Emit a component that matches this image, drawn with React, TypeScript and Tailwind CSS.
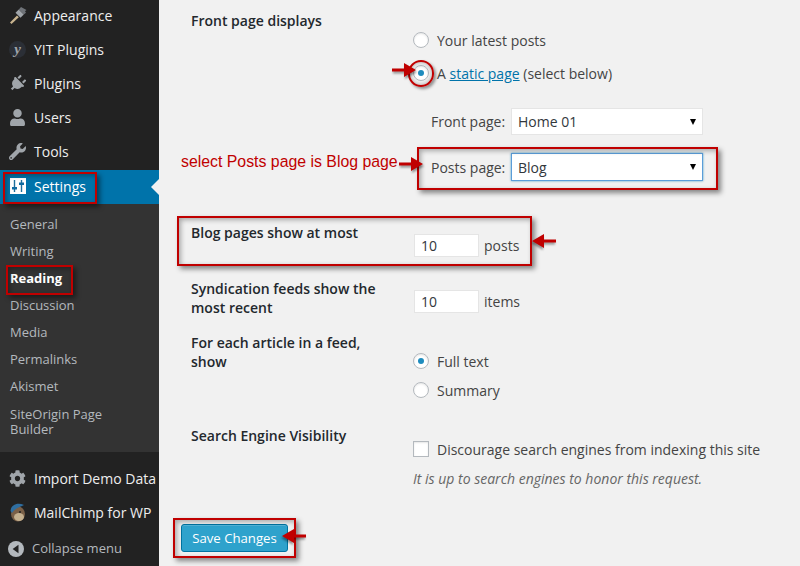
import React from "react";
import { FaPlug, FaUser, FaWrench, FaCog } from "react-icons/fa";

const font = "font-['Open_Sans',sans-serif]";

const BrushIcon = () => (
  <svg width="18" height="18" viewBox="0 0 18 18">
    <path d="M1 16.5 8 9.5l1.8 1.8L2.5 18Z" fill="#c9b48f" />
    <path d="M6.5 6.8 9.8 3.5l5 5-3.3 3.3Z" fill="#a0a5aa" />
    <path d="M9.8 3.5 12 1l5.5 3-1.5 1.2 1 1.6-2.2 1.7Z" fill="#6f7378" />
  </svg>
);

const SettingsIcon = () => (
  <svg width="16" height="16" viewBox="0 0 16 16">
    <rect width="16" height="16" fill="#fff" />
    <path d="M4.5 2v12M11.5 2v12" stroke="#1d6f9c" strokeWidth="1.4" />
    <path d="M2 9h5v2.4H2ZM9 4.6h5V7H9Z" fill="#0f6aa0" />
  </svg>
);

const YitIcon = () => (
  <div className="flex h-[17px] w-[17px] items-center justify-center rounded-full bg-[#2b2f36] font-['Liberation_Serif',serif] text-[15px] font-bold italic leading-none text-[#a0a5aa]">
    y
  </div>
);

const ChimpIcon = () => (
  <svg width="18" height="20" viewBox="0 0 18 20">
    <ellipse cx="9" cy="12" rx="7" ry="7.5" fill="#7a6048" />
    <ellipse cx="10" cy="15" rx="5" ry="4" fill="#c4b08f" />
    <path d="M1.5 9C2 3 8 0 15 3 12 4.5 6 6 3 11Z" fill="#2f6ea0" />
    <circle cx="11" cy="10" r="1" fill="#222" />
  </svg>
);

const CollapseIcon = () => (
  <svg width="16" height="16" viewBox="0 0 16 16">
    <circle cx="8" cy="8" r="8" fill="#b4b9be" />
    <path d="M10.5 3.8v8.4L4.6 8Z" fill="#222" />
  </svg>
);

const MenuItem = ({ icon, label }: { icon: React.ReactNode; label: string }) => (
  <div className="flex h-[34px] items-center pb-[4px] text-[14px] text-[#eee]">
    <div className="flex w-[34px] items-center justify-center pl-[1px] text-[17px] text-[#a0a5aa]">{icon}</div>
    <span className="whitespace-nowrap">{label}</span>
  </div>
);

const subItems = ["General", "Writing", "Reading", "Discussion", "Media", "Permalinks", "Akismet"];

const Sidebar = () => (
  <div className="flex h-[566px] w-[159px] shrink-0 flex-col overflow-hidden bg-[#222]">
    <div>
      <MenuItem icon={<BrushIcon />} label="Appearance" />
      <MenuItem icon={<YitIcon />} label="YIT Plugins" />
      <MenuItem icon={<FaPlug className="rotate-45" />} label="Plugins" />
      <MenuItem icon={<FaUser />} label="Users" />
      <MenuItem icon={<FaWrench />} label="Tools" />
    </div>
    <div className="relative flex h-[34px] items-center bg-[#0073aa] pb-[2px] text-[14px] text-white">
      <div className="flex w-[34px] items-center justify-center pl-[1px]"><SettingsIcon /></div>
      <span>Settings</span>
      <div className="absolute right-0 top-[9px] h-0 w-0 border-y-[8px] border-r-[8px] border-y-transparent border-r-[#f1f1f1]" />
    </div>
    <div className="flex h-[248px] flex-col bg-[#333] pt-[7px] text-[13px] text-[#b4b9be]">
      {subItems.map((s) => (
        <div key={s} className={`flex h-[27px] items-center pl-[10px] ${s === "Reading" ? "font-bold text-white" : ""}`}>
          {s}
        </div>
      ))}
      <div className="mt-[7px] pl-[10px] leading-[15px]">SiteOrigin Page<br />Builder</div>
    </div>
    <div className="mt-[11px]">
      <MenuItem icon={<FaCog />} label="Import Demo Data" />
      <MenuItem icon={<ChimpIcon />} label="MailChimp for WP" />
    </div>
    <div className="mt-[1px] flex h-[34px] items-center text-[13px] text-[#b4b9be]">
      <div className="flex w-[32px] items-center justify-center"><CollapseIcon /></div>
      <span>Collapse menu</span>
    </div>
  </div>
);

const Radio = ({ checked }: { checked?: boolean }) => (
  <div className="flex h-4 w-4 shrink-0 items-center justify-center rounded-full border border-[#b4b9be] bg-white shadow-[inset_0_1px_2px_rgba(0,0,0,0.1)]">
    {checked && <div className="h-[6px] w-[6px] rounded-full bg-[#1e8cbe]" />}
  </div>
);

const Select = ({ value, focused }: { value: string; focused?: boolean }) => (
  <div className="relative">
    <select
      defaultValue={value}
      className={`block w-[192px] appearance-none border bg-white pl-[6px] text-[14px] text-[#32373c] outline-none ${
        focused ? "h-[28px] border-[#5b9dd9] shadow-[0_0_2px_rgba(30,140,190,0.8)]" : "h-[27px] border-[#e5e5e5]"
      }`}
    >
      <option>{value}</option>
    </select>
    <div className="absolute right-[7px] top-[11px] h-0 w-0 border-x-[3.5px] border-t-[6px] border-x-transparent border-t-black" />
  </div>
);

const PageSelect = ({ label, value, focused, className }: { label: string; value: string; focused?: boolean; className: string }) => (
  <div className={`flex items-center pl-[18px] ${className}`}>
    <span className="w-[80px] whitespace-nowrap">{label}</span>
    <Select value={value} focused={focused} />
  </div>
);

const NumberInput = () => (
  <input
    readOnly
    value="10"
    className="ml-[1px] h-[23px] w-[65px] border border-[#e5e5e5] bg-white pl-[6px] text-[14px] text-[#32373c] outline-none"
  />
);

const RedBox = ({ className }: { className: string }) => (
  <div className={`pointer-events-none absolute border-[2px] border-[#c00000] shadow-[3px_3px_5px_rgba(0,0,0,0.45),inset_2px_2px_5px_rgba(0,0,0,0.3)] ${className}`} />
);

const Arrow = ({ className, flip }: { className: string; flip?: boolean }) => (
  <svg
    width="24"
    height="14"
    viewBox="0 0 24 14"
    className={`pointer-events-none absolute drop-shadow-[1px_2px_1px_rgba(0,0,0,0.4)] ${flip ? "-scale-x-100" : ""} ${className}`}
  >
    <path d="M0 5.5h12V0l12 7-12 7V8.5H0Z" fill="#c00000" />
  </svg>
);

const Row = ({ label, className, children }: { label?: React.ReactNode; className: string; children?: React.ReactNode }) => (
  <div className={`flex ${className}`}>
    <div className="w-[222px] shrink-0 text-[14px] font-semibold leading-[19px] text-[#23282d]">{label}</div>
    <div className="flex flex-col">{children}</div>
  </div>
);

export default function App() {
  return (
    <div className={`relative flex h-[566px] w-[800px] overflow-hidden bg-[#f1f1f1] ${font}`}>
      <Sidebar />
      <div className="flex-1 pl-[32px] pt-[11px] text-[14px] text-[#444]">
        <Row label="Front page displays" className="h-[171px]">
          <div className="mt-[19px] flex h-5 items-center gap-2"><Radio />Your latest posts</div>
          <div className="mt-[13px] flex h-5 items-center gap-2">
            <Radio checked />
            <span>A <span className="text-[#0073aa] underline">static page</span> (select below)</span>
          </div>
          <PageSelect label="Front page:" value="Home 01" className="mt-[25px]" />
          <PageSelect label="Posts page:" value="Blog" focused className="mt-[18px]" />
        </Row>
        <Row label="Blog pages show at most" className="mt-[41px] h-[56px]">
          <div className="mt-[11px] flex items-center gap-[5px]"><NumberInput />posts</div>
        </Row>
        <Row label={<>Syndication feeds show the<br />most recent</>} className="h-[54px]">
          <div className="mt-[11px] flex items-center gap-[5px]"><NumberInput />items</div>
        </Row>
        <Row label={<>For each article in a feed,<br />show</>} className="h-[93px]">
          <div className="mt-[18px] flex h-5 items-center gap-2"><Radio checked />Full text</div>
          <div className="mt-[9px] flex h-5 items-center gap-2"><Radio />Summary</div>
        </Row>
        <Row label="Search Engine Visibility" className="h-[82px]">
          <div className="mt-[13px] flex h-5 items-center gap-2">
            <div className="h-4 w-4 border border-[#b4b9be] bg-white shadow-[inset_0_1px_2px_rgba(0,0,0,0.1)]" />
            <span className="whitespace-nowrap">Discourage search engines from indexing this site</span>
          </div>
          <div className="mt-[9px] whitespace-nowrap italic text-[#666]">It is up to search engines to honor this request.</div>
        </Row>
        <button className="ml-[-10px] mt-[16px] h-[28px] w-[107px] rounded-[3px] border border-[#0074a2] bg-[#2ea2cc] pt-[1px] text-[13.2px] text-white shadow-[inset_0_1px_0_rgba(120,200,230,0.5)]">
          Save Changes
        </button>
      </div>

      <RedBox className="left-[3px] top-[172px] h-[32px] w-[94px]" />
      <RedBox className="left-[6px] top-[265px] h-[30px] w-[67px]" />
      <RedBox className="left-[417px] top-[147px] h-[43px] w-[301px]" />
      <RedBox className="left-[177px] top-[216px] h-[50px] w-[355px]" />
      <RedBox className="left-[173px] top-[518px] h-[40px] w-[123px]" />
      <div className="pointer-events-none absolute left-[408px] top-[60px] h-[27px] w-[26px] rounded-full border-[2px] border-[#c00000] shadow-[2px_2px_3px_rgba(0,0,0,0.4),inset_0_0_4px_rgba(0,0,0,0.3)]" />
      <Arrow className="left-[392px] top-[63px]" />
      <Arrow className="left-[399px] top-[157px]" />
      <Arrow flip className="left-[532px] top-[234px]" />
      <Arrow flip className="left-[282px] top-[529px]" />
      <div className="absolute left-[181px] top-[153px] whitespace-nowrap font-['Liberation_Sans',sans-serif] text-[15.85px] leading-[18px] text-[#c00000]">
        select Posts page is Blog page
      </div>
    </div>
  );
}
